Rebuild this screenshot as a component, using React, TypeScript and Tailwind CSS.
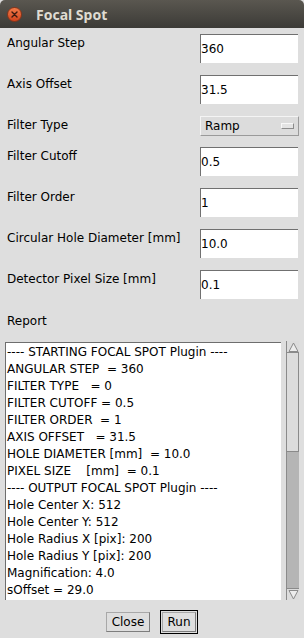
import React from "react";

const FIELD_ROWS: { label: string; value: string }[] = [
  { label: "Angular Step", value: "360" },
  { label: "Axis Offset", value: "31.5" },
];
const FIELD_ROWS2: { label: string; value: string }[] = [
  { label: "Filter Cutoff", value: "0.5" },
  { label: "Filter Order", value: "1" },
  { label: "Circular Hole Diameter [mm]", value: "10.0" },
  { label: "Detector Pixel Size [mm]", value: "0.1" },
];

const REPORT = [
  "---- STARTING FOCAL SPOT Plugin ----",
  "ANGULAR STEP  = 360",
  "FILTER TYPE   = 0",
  "FILTER CUTOFF = 0.5",
  "FILTER ORDER  = 1",
  "AXIS OFFSET   = 31.5",
  "HOLE DIAMETER [mm]  = 10.0",
  "PIXEL SIZE    [mm]  = 0.1",
  "---- OUTPUT FOCAL SPOT Plugin ----",
  "Hole Center X: 512",
  "Hole Center Y: 512",
  "Hole Radius X [pix]: 200",
  "Hole Radius Y [pix]: 200",
  "Magnification: 4.0",
  "sOffset = 29.0",
];

function FieldRow({ label, value, last }: { label: string; value: string; last?: boolean }) {
  return (
    <div className={`flex h-[29px] ${last ? "" : "mb-[12px]"}`}>
      <div className="w-[200px] pl-[7px] pt-[2px] leading-[14px] text-black">{label}</div>
      <div className="w-[98px] h-[29px] bg-white border-t border-l border-[#707070] flex items-center leading-[14px] text-black">
        {value}
      </div>
    </div>
  );
}

export default function App() {
  return (
    <div className="w-[304px] h-[638px] bg-[#dedede] flex flex-col overflow-hidden font-['DejaVu_Sans',sans-serif] text-[12px]">
      {/* title bar */}
      <div className="h-[28px] rounded-t-[5px] bg-gradient-to-b from-[#5a5750] to-[#3c3b37] flex items-center pl-[7px]">
        <div className="w-[15px] h-[15px] rounded-full bg-gradient-to-b from-[#f27a48] to-[#d1431c] border border-[#8a3418] flex items-center justify-center">
          <svg width="7" height="7" viewBox="0 0 7 7">
            <path d="M1 1 L6 6 M6 1 L1 6" stroke="#3a1a10" strokeWidth="1.4" strokeLinecap="round" />
          </svg>
        </div>
        <span className="ml-[14px] font-['Noto_Sans',sans-serif] font-bold text-[14px] leading-[16px] text-[#dfdbd2] pt-px">
          Focal Spot
        </span>
      </div>

      <div className="flex flex-col pt-[6px]">
        {FIELD_ROWS.map((r) => (
          <FieldRow key={r.label} label={r.label} value={r.value} />
        ))}
        {/* dropdown row */}
        <div className="flex h-[20px] mb-[11px]">
          <div className="w-[200px] pl-[7px] pt-[2px] leading-[14px] text-black">Filter Type</div>
          <div className="w-[99px] h-[20px] bg-[#dcdcdc] border border-[#f4f4f4] border-r-[#9a9a9a] border-b-[#9a9a9a] flex items-center justify-between pl-[4px] pr-[4px] leading-[14px] text-black">
            <span>Ramp</span>
            <div className="w-[13px] h-[6px] bg-[#e4e4e4] border border-[#f8f8f8] border-r-[#8c8c8c] border-b-[#8c8c8c]" />
          </div>
        </div>
        {FIELD_ROWS2.map((r, i) => (
          <FieldRow key={r.label} label={r.label} value={r.value} last={i === FIELD_ROWS2.length - 1} />
        ))}

        <div className="mt-[15px] pl-[7px] leading-[14px] text-black">Report</div>

        {/* report area */}
        <div className="mt-[14px] flex pl-[5px]">
          <div className="w-[276px] h-[258px] bg-white border-t border-l border-[#6e6e6e] pl-[1px] pt-[1px] overflow-hidden">
            {REPORT.map((l, i) => (
              <div key={i} className="leading-[17px] whitespace-pre text-black">
                {l}
              </div>
            ))}
          </div>
          <div className="ml-[5px] -mt-px w-[13px] h-[259px] flex flex-col bg-[#b5b5b5] border-l border-[#8a8a8a]">
            <div className="h-[12px] bg-[#dcdcdc] border-b border-[#8a8a8a] flex items-center justify-center">
              <svg width="11" height="10" viewBox="0 0 11 10">
                <polygon points="5.5,1 10,9.5 1,9.5" fill="#ececec" stroke="#8a8a8a" strokeWidth="1" />
              </svg>
            </div>
            <div className="h-[99px] bg-[#dcdcdc] border-r border-b border-[#8a8a8a]" />
            <div className="flex-1" />
            <div className="h-[12px] bg-[#dcdcdc] border-t border-[#8a8a8a] flex items-center justify-center">
              <svg width="11" height="10" viewBox="0 0 11 10">
                <polygon points="1,0.5 10,0.5 5.5,9" fill="#ececec" stroke="#8a8a8a" strokeWidth="1" />
              </svg>
            </div>
          </div>
        </div>

        {/* buttons */}
        <div className="mt-[10px] flex justify-center items-center gap-[10px] h-[24px]">
          <button className="w-[44px] h-[20px] bg-[#dedede] border border-[#a8a8a8] border-r-[#7d7d7d] border-b-[#7d7d7d] leading-[14px] text-black">
            Close
          </button>
          <div className="w-[38px] h-[24px] border border-black p-px flex">
            <button className="flex-1 bg-[#dedede] border border-[#a8a8a8] border-r-[#7d7d7d] border-b-[#7d7d7d] leading-[14px] text-black">
              Run
            </button>
          </div>
        </div>
      </div>
    </div>
  );
}
